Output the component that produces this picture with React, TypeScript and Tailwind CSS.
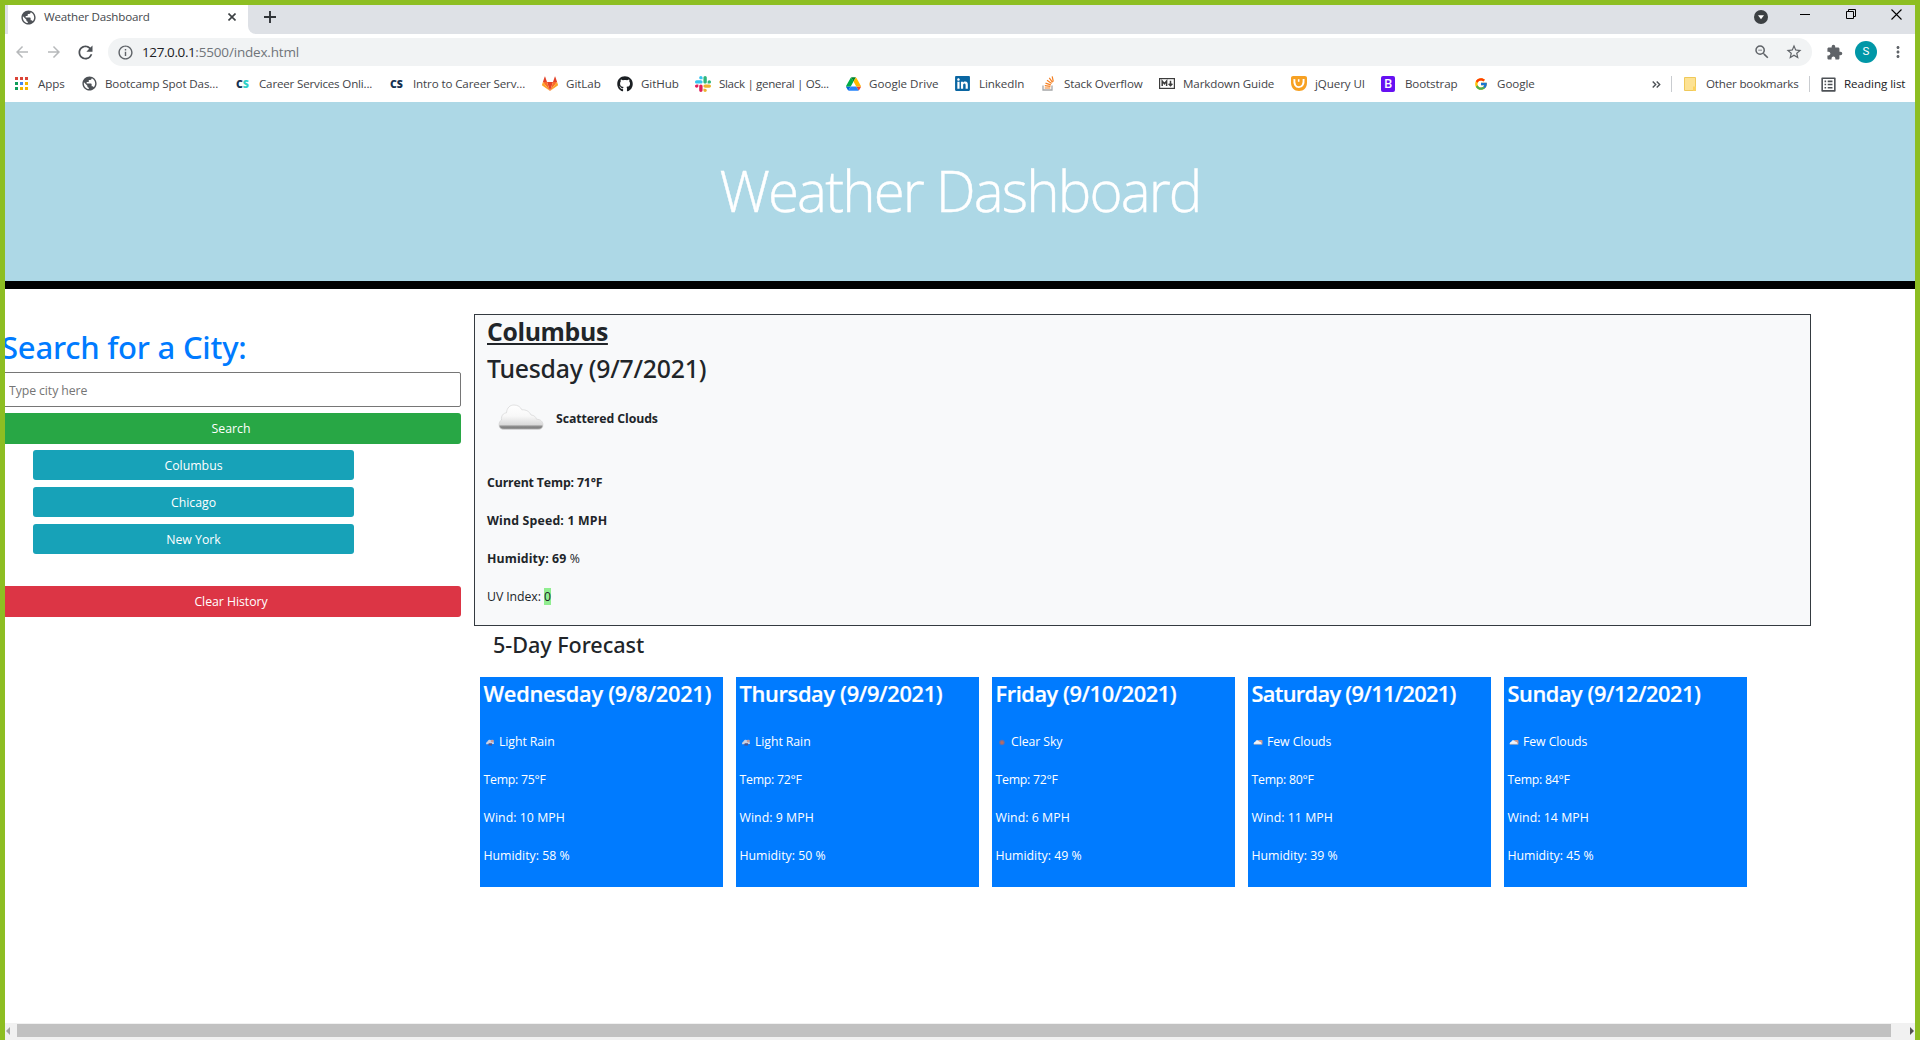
import React from "react";
import { FcGoogle } from "react-icons/fc";
import { FaGithub, FaLinkedin } from "react-icons/fa";
import {
  MdArrowBack,
  MdArrowForward,
  MdExtension,
  MdInfoOutline,
  MdMoreVert,
  MdOutlineListAlt,
  MdPublic,
  MdRefresh,
  MdStarBorder,
  MdZoomOut,
} from "react-icons/md";

function AppsIcon() {
  const colors = ["#db4437", "#db4437", "#db4437", "#0f9d58", "#4285f4", "#f4b400", "#0f9d58", "#f4b400", "#f4b400"];
  return (
    <svg width="13" height="13" viewBox="0 0 13 13">
      {colors.map((c, i) => (
        <rect key={i} x={(i % 3) * 5} y={Math.floor(i / 3) * 5} width="3" height="3" fill={c} />
      ))}
    </svg>
  );
}

function GitlabIcon() {
  return (
    <svg width="16" height="16" viewBox="0 0 16 16">
      <path d="M8 15 5 6h6z" fill="#e24329" />
      <path d="M8 15 5 6H.9zM8 15l3-9h4.1z" fill="#fc6d26" />
      <path d="M.9 6 0 8.8c-.1.3 0 .6.2.7L8 15zM15.100 6l.9 2.800c.1.3 0 .6-.2.7L8 15z" fill="#fca326" />
      <path d="M.9 6H5L3.200.8c-.1-.3-.4-.3-.5 0zM15.100 6H11l1.800-5.200c.1-.3.4-.3.5 0z" fill="#e24329" />
    </svg>
  );
}

function SlackIcon() {
  return (
    <svg width="16" height="16" viewBox="0 0 122.800 122.800">
      <path d="M25.800 77.600c0 7.100-5.800 12.900-12.900 12.900S0 84.700 0 77.600s5.800-12.900 12.900-12.900h12.900zM32.300 77.600c0-7.100 5.800-12.900 12.900-12.900s12.900 5.800 12.900 12.900v32.300c0 7.100-5.800 12.900-12.900 12.900s-12.900-5.800-12.900-12.900z" fill="#e01e5a" />
      <path d="M45.200 25.800c-7.100 0-12.900-5.800-12.900-12.900S38.100 0 45.200 0s12.900 5.800 12.900 12.900v12.900zM45.200 32.300c7.100 0 12.900 5.800 12.900 12.900s-5.800 12.900-12.900 12.900H12.900C5.800 58.100 0 52.300 0 45.200s5.800-12.900 12.900-12.900z" fill="#36c5f0" />
      <path d="M97 45.200c0-7.100 5.800-12.900 12.900-12.900s12.900 5.800 12.900 12.900-5.800 12.900-12.900 12.900H97zM90.500 45.200c0 7.100-5.800 12.900-12.900 12.900s-12.900-5.800-12.900-12.900V12.900C64.700 5.800 70.500 0 77.600 0s12.900 5.800 12.900 12.900z" fill="#2eb67d" />
      <path d="M77.600 97c7.100 0 12.900 5.800 12.900 12.900s-5.800 12.900-12.900 12.900-12.900-5.800-12.900-12.900V97zM77.600 90.500c-7.100 0-12.900-5.800-12.900-12.900s5.800-12.900 12.900-12.900h32.300c7.100 0 12.900 5.800 12.900 12.900s-5.800 12.900-12.900 12.900z" fill="#ecb22e" />
    </svg>
  );
}

function DriveIcon() {
  return (
    <svg width="15" height="14" viewBox="0 0 87.300 78">
      <path d="m6.600 66.850 3.850 6.650c.8 1.400 1.950 2.500 3.300 3.300L27.500 53H0c0 1.550.4 3.100 1.200 4.500z" fill="#0066da" />
      <path d="M43.650 25 29.900 1.200c-1.350.8-2.500 1.900-3.300 3.300L1.200 48.500A9.060 9.060 0 0 0 0 53h27.500z" fill="#00ac47" />
      <path d="M73.550 76.800c1.350-.8 2.500-1.900 3.300-3.300l9.250-16c.8-1.400 1.200-2.950 1.200-4.500H59.800l5.850 11.500z" fill="#ea4335" />
      <path d="M43.650 25 57.400 1.200C56.050.4 54.500 0 52.900 0H34.400c-1.600 0-3.150.45-4.500 1.200z" fill="#00832d" />
      <path d="M59.800 53H27.500L13.750 76.800c1.350.8 2.900 1.200 4.500 1.200h50.800c1.600 0 3.150-.45 4.500-1.200z" fill="#2684fc" />
      <path d="m73.400 26.500-12.700-22c-.8-1.400-1.950-2.500-3.300-3.300L43.650 25 59.800 53h27.450c0-1.550-.4-3.100-1.200-4.500z" fill="#ffba00" />
    </svg>
  );
}

function StackOverflowIcon() {
  return (
    <svg width="13" height="15" viewBox="0 0 13 15" fill="none">
      <path d="M1 9.500V14h9V9.500" stroke="#a5a6a8" strokeWidth="1.300" />
      <path d="M2.700 12h5.600M2.800 9.700l5.600.6M3.500 7.100l5.300 1.800M5 4.200l4.600 3.200M7.300 1.800l3.200 4.500M10.200.4l1.100 5.200" stroke="#f48024" strokeWidth="1.200" />
    </svg>
  );
}

function MarkdownIcon() {
  return (
    <svg width="16" height="11" viewBox="0 0 16 11" fill="none" stroke="#3c3c3c">
      <rect x=".6" y=".6" width="14.800" height="9.800" strokeWidth="1.200" />
      <path d="M3.200 8V3l2.200 2.700L7.600 3v5M11.500 2.800v4.500M9.600 5.700l1.900 2 1.900-2" strokeWidth="1.500" />
    </svg>
  );
}

function JqueryUiIcon() {
  return (
    <svg width="16" height="15" viewBox="0 0 15 15" preserveAspectRatio="none" fill="none">
      <path d="M0 2C0 .8.8 0 2 0h11c1.200 0 2 .8 2 2v4.500c0 5-3 8.500-7.500 8.500S0 11.500 0 6.500z" fill="#f7a123" />
      <path d="M3.200 3.200c-.5 5 1 8 4.300 8 3.300 0 4.600-3.300 4.300-8.200" stroke="#fff" strokeWidth="1.800" />
      <path d="M7.200 3.200v2.600" stroke="#fff" strokeWidth="1.500" />
    </svg>
  );
}

function LetterBadge() {
  return (
    <span className="flex h-4 w-3.5 items-center justify-center rounded-[2px] bg-[#6610f2] text-[12.500px] font-semibold leading-none text-white">
      B
    </span>
  );
}

function CsMark({ accent }: { accent: string }) {
  return (
    <span className="font-['Open_Sans'] text-[10.500px] font-extrabold leading-none tracking-[-0.2px] text-[#14304f]">
      C<span className={accent}>S</span>
    </span>
  );
}

const globe = <MdPublic className="-ml-px size-[17px] text-[#4d5156]" />;

const bookmarks = [
  { label: "Apps", icon: <AppsIcon />, item: "w-[67px]", box: "w-[23px]", track: "tracking-[-0.05px]" },
  { label: "Bootcamp Spot Das...", icon: globe, item: "w-[154px]", box: "w-[23px]", track: "tracking-[-0.12px]" },
  { label: "Career Services Onli...", icon: <CsMark accent="text-[#2fd0c8]" />, item: "w-[154px]", box: "w-[23px]", track: "tracking-[-0.18px]" },
  { label: "Intro to Career Serv...", icon: <CsMark accent="text-[#14304f]" />, item: "w-[152px]", box: "w-[23px]", track: "tracking-[-0.13px]" },
  { label: "GitLab", icon: <GitlabIcon />, item: "w-[75px]", box: "w-[24px]", track: "tracking-[-0.05px]" },
  { label: "GitHub", icon: <FaGithub className="size-4 text-[#1b1f23]" />, item: "w-[78px]", box: "w-[24px]", track: "tracking-[-0.1px]" },
  { label: "Slack | general | OS...", icon: <SlackIcon />, item: "w-[151px]", box: "w-[24px]", track: "tracking-[-0.33px]" },
  { label: "Google Drive", icon: <DriveIcon />, item: "w-[109px]", box: "w-[23px]", track: "tracking-[0px]" },
  { label: "LinkedIn", icon: <FaLinkedin className="-ml-px size-[17px] text-[#0a66a2]" />, item: "w-[87px]", box: "w-[24px]", track: "tracking-[-0.1px]" },
  { label: "Stack Overflow", icon: <StackOverflowIcon />, item: "w-[117px]", box: "w-[22px]", track: "tracking-[-0.13px]" },
  { label: "Markdown Guide", icon: <MarkdownIcon />, item: "w-[132px]", box: "w-[24px]", track: "tracking-[-0.12px]" },
  { label: "jQuery UI", icon: <JqueryUiIcon />, item: "w-[90px]", box: "w-[24px]", track: "tracking-[-0.1px]" },
  { label: "Bootstrap", icon: <LetterBadge />, item: "w-[93px]", box: "w-[24px]", track: "tracking-[-0.12px]" },
  { label: "Google", icon: <FcGoogle className="size-[14px]" />, item: "w-[70px]", box: "w-[23px]", track: "tracking-[-0.05px]" },
];

function TabStrip() {
  return (
    <div className="flex h-[29px] bg-[#dee1e6] pl-[3px]">
      <div className="flex h-full w-[240px] items-center bg-white pl-[13px] pr-[12px] pb-[5px]">
        <MdPublic className="-ml-px size-[17px] text-[#4d5156]" />
        <span className="ml-[7px] flex-1 text-[11.600px] tracking-[-0.2px] text-[#45494d]">Weather Dashboard</span>
        <svg width="8" height="8" viewBox="0 0 8 8" className="text-[#3c4043]">
          <path d="m.5.5 7 7m0-7-7 7" stroke="currentColor" strokeWidth="1.600" />
        </svg>
      </div>
      <div className="flex h-full w-2 bg-white">
        <div className="h-full flex-1 rounded-bl-lg bg-[#dee1e6]" />
      </div>
      <svg width="12" height="12" viewBox="0 0 12 12" className="ml-[8px] mt-[6px]">
        <path d="M6 0v12M0 6h12" stroke="#303338" strokeWidth="1.900" />
      </svg>
      <div className="flex-1" />
      <svg width="14" height="14" viewBox="0 0 14 14" className="mt-[5px]">
        <circle cx="7" cy="7" r="7" fill="#3c4043" />
        <path d="M4 5.300h6L7 9.300z" fill="#fff" />
      </svg>
      <svg width="10" height="10" viewBox="0 0 10 10" className="ml-[32px] mt-[4px]">
        <path d="M0 5.500h10" stroke="#000" />
      </svg>
      <svg width="10" height="10" viewBox="0 0 10 10" fill="none" stroke="#000" className="ml-[36px] mt-[4px]">
        <path d="M.5 2.500h7v7h-7zM2.500 2.500v-2h7v7h-2" />
      </svg>
      <svg width="11" height="11" viewBox="0 0 11 11" className="ml-[35px] mr-[13px] mt-[4px]">
        <path d="m.5.5 10 10m0-10-10 10" stroke="#000" strokeWidth="1.100" />
      </svg>
    </div>
  );
}

function AddressBar() {
  return (
    <div className="flex h-[36px] items-center pl-[8px] text-[#5f6368]">
      <MdArrowBack className="size-[18px] text-[#b7b9bb]" />
      <MdArrowForward className="ml-[14px] size-[18px] text-[#b7b9bb]" />
      <MdRefresh className="ml-[12px] size-[21px] text-[#4d5156]" />
      <div className="ml-[12px] flex h-7 w-[1704px] items-center rounded-full bg-[#f1f3f4] pl-[9px] pr-[9px]">
        <MdInfoOutline className="size-[17px]" />
        <span className="ml-[8px] flex-1 text-[13.500px] tracking-[-0.180px] text-[#70757a]">
          <span className="tracking-[-0.400px] text-[#202124]">127.0.0.1</span>:5500/index.html
        </span>
        <MdZoomOut className="size-[18px]" />
        <MdStarBorder className="ml-[14px] size-[18px]" />
      </div>
      <MdExtension className="ml-[14px] size-[17px]" />
      <span className="ml-[12px] flex size-[22px] items-center justify-center rounded-full bg-[#0097a7] font-[Roboto] text-[11.500px] text-white">
        S
      </span>
      <MdMoreVert className="ml-[12px] size-[18px]" />
    </div>
  );
}

function BookmarksBar() {
  return (
    <div className="flex h-[32px] items-center pb-[4px] pl-[10px] text-[11.600px] text-[#3f4347]">
      {bookmarks.map((b) => (
        <div key={b.label} className={`flex shrink-0 items-center ${b.item}`}>
          <span className={`flex shrink-0 items-center ${b.box}`}>{b.icon}</span>
          <span className={`whitespace-nowrap ${b.track}`}>{b.label}</span>
        </div>
      ))}
      <div className="flex-1" />
      <svg width="9" height="7" viewBox="0 0 9 7" fill="none" className="mr-[10px]">
        <path d="M.7.5l3 3-3 3M4.700.5l3 3-3 3" stroke="#4d5156" strokeWidth="1.400" />
      </svg>
      <div className="h-4 w-px bg-[#c9ccd0]" />
      <svg width="12" height="14" viewBox="0 0 12 14" className="ml-[12px]">
        <path d="M.5.5h11v13H.5z" fill="#fde293" stroke="#efc95b" />
        <path d="M9 9.500h3V14H9z" fill="#fbd25f" />
      </svg>
      <span className="ml-[10px] w-[103px] whitespace-nowrap tracking-[-0.18px]">Other bookmarks</span>
      <div className="h-4 w-px bg-[#c9ccd0]" />
      <MdOutlineListAlt className="ml-[9px] size-[19px] text-[#4d5156]" />
      <span className="ml-[6px] w-[71px] whitespace-nowrap tracking-[-0.05px] text-[#202124]">Reading list</span>
    </div>
  );
}

function ScatteredClouds() {
  return (
    <svg width="46" height="28" viewBox="0 0 46 28" className="-mt-[6px]">
      <defs>
        <linearGradient id="cloud" x1="0" y1="0" x2="0" y2="1">
          <stop offset="0" stopColor="#fff" />
          <stop offset=".45" stopColor="#f8f8f8" />
          <stop offset=".8" stopColor="#dadada" />
          <stop offset=".87" stopColor="#8f8f8f" />
          <stop offset=".94" stopColor="#7d7d7d" />
          <stop offset="1" stopColor="#c0c0c0" />
        </linearGradient>
      </defs>
      <path
        d="M6 26.500c-3 0-5-2-5-4.800 0-2.400 1.200-3.900 2.500-4.700C3 12.500 5.500 10 8.500 9.800 9 4.500 12 2 16 2c4 0 6.500 2 7.800 4.800C28 6.500 31.500 8.500 33 12c3 .2 4.800 1.800 5.500 4.200 4 0 6.500 2.500 6.500 5.500s-2 4.800-5 4.800z"
        fill="url(#cloud)"
        stroke="#d2d2d2"
        strokeWidth=".8"
        strokeOpacity=".8"
      />
    </svg>
  );
}

type Sky = "Light Rain" | "Clear Sky" | "Few Clouds";

function SkyIcon({ sky }: { sky: Sky }) {
  if (sky === "Clear Sky") {
    return (
      <svg width="10" height="8" viewBox="0 0 10 8">
        <circle cx="5" cy="4.500" r="2.700" fill="#6f6d9d" />
        <circle cx="5" cy="4.500" r="1.600" fill="#b56c62" />
      </svg>
    );
  }
  if (sky === "Few Clouds") {
    return (
      <svg width="10" height="8" viewBox="0 0 10 8">
        <rect x="5" y="2" width="4.500" height="4.200" rx="1" fill="#cf9a8f" />
        <path d="M.6 6.200C.6 4.500 1.500 4 2.200 4c.3-2 3-2.600 3.800-.5 1.500 0 2.600 1 2.600 2.700z" fill="#f2f4f8" />
        <path d="M1 6.400h8.300" stroke="#8fa3c4" />
      </svg>
    );
  }
  return (
    <svg width="10" height="8" viewBox="0 0 10 8">
      <path d="M1 6.300C1 4.500 1.800 3.700 2.500 3.500 3 1.500 5.500 1 6.400 2.700 8 2.500 9 3.700 9 6z" fill="#c9d0e0" />
      <rect x="5.800" y="1.800" width="3" height="2.400" rx="1" fill="#c99a98" />
      <path d="M3.700 5.200h3.300v2.300H3.200z" fill="#4a5590" />
    </svg>
  );
}

const forecast: { day: string; track: string; sky: Sky; temp: number; wind: number; humidity: number }[] = [
  { day: "Wednesday (9/8/2021)", track: "tracking-[-0.260px]", sky: "Light Rain", temp: 75, wind: 10, humidity: 58 },
  { day: "Thursday (9/9/2021)", track: "tracking-[-0.330px]", sky: "Light Rain", temp: 72, wind: 9, humidity: 50 },
  { day: "Friday (9/10/2021)", track: "tracking-[-0.440px]", sky: "Clear Sky", temp: 72, wind: 6, humidity: 49 },
  { day: "Saturday (9/11/2021)", track: "tracking-[-0.690px]", sky: "Few Clouds", temp: 80, wind: 11, humidity: 39 },
  { day: "Sunday (9/12/2021)", track: "tracking-[-0.460px]", sky: "Few Clouds", temp: 84, wind: 14, humidity: 45 },
];

function SearchPanel() {
  return (
    <aside className="-ml-1 flex w-[460px] shrink-0 flex-col pt-[39px] text-[12.300px]">
      <h2 className="font-['Noto_Sans'] text-[31px] font-medium leading-[38px] tracking-[-0.220px] text-[#007bff]">
        Search for a City:
      </h2>
      <input
        placeholder="Type city here"
        className="mt-1.5 h-[35px] rounded-[2px] border border-[#767676] bg-white pl-[7px] pt-px tracking-[-0.1px] placeholder:text-[#757575]"
      />
      <button className="mt-1.5 h-[31px] rounded-[3px] bg-[#28a745] pt-0.5 text-white">Search</button>
      <div className="mt-1.5 flex flex-col gap-[7px] pl-8 pr-[107px]">
        {["Columbus", "Chicago", "New York"].map((city) => (
          <button key={city} className="h-[30px] rounded-[3px] bg-[#17a2b8] pt-[3px] text-white">
            {city}
          </button>
        ))}
      </div>
      <button className="mt-8 h-[31px] rounded-[3px] bg-[#dc3545] pt-0.5 tracking-[-0.05px] text-white">Clear History</button>
    </aside>
  );
}

function CurrentWeather() {
  return (
    <section className="h-[312px] w-[1337px] border border-[#343a40] bg-[#f8f9fa] pl-3 pt-px text-[12.300px] text-[#212529]">
      <h2 className="text-[24.800px] font-bold leading-[30px] tracking-[-0.350px] underline decoration-2 underline-offset-[2px]">
        Columbus
      </h2>
      <h2 className="mt-[7px] font-['Noto_Sans'] text-[24.800px] font-medium leading-[30px] tracking-[-0.230px]">
        Tuesday (9/7/2021)
      </h2>
      <div className="flex h-[73px] items-center pl-[11px] font-bold">
        <ScatteredClouds />
        <span className="ml-3 tracking-[-0.100px]">Scattered Clouds</span>
      </div>
      <div className="mt-[18px] flex flex-col gap-5 font-bold leading-[18px]">
        <p className="tracking-[-0.140px]">Current Temp: 71°F</p>
        <p className="tracking-[0.180px]">Wind Speed: 1 MPH</p>
        <p className="tracking-[0.120px]">
          Humidity: 69 <span className="font-normal">%</span>
        </p>
        <p className="font-normal tracking-[-0.080px]">
          UV Index: <span className="bg-[#90ee90]">0</span>
        </p>
      </div>
    </section>
  );
}

function Forecast() {
  return (
    <section>
      <h3 className="mt-[6px] pl-[19px] font-['Noto_Sans'] text-[21.600px] font-medium leading-[26px] tracking-[-0.050px] text-[#212529]">
        5-Day Forecast
      </h3>
      <div className="mt-[19px] flex gap-[13px] pl-[6px]">
        {forecast.map((f) => (
          <article key={f.day} className="h-[210px] w-[243px] bg-[#007bff] p-[3px] text-[12.300px] text-white">
            <h3 className={`whitespace-nowrap pl-[0.5px] text-[21.800px] font-semibold leading-[27px] [-webkit-text-stroke:0.2px_white] ${f.track}`}>
              {f.day}
            </h3>
            <div className="mt-[26px] flex flex-col gap-5 pl-[0.5px] leading-[18px]">
              <p className="flex items-center">
                <span className="flex w-[15.500px] shrink-0 pl-[1px]">
                  <SkyIcon sky={f.sky} />
                </span>
                <span className="tracking-[-0.080px]">{f.sky}</span>
              </p>
              <p className="tracking-[-0.250px]">Temp: {f.temp}°F</p>
              <p className="tracking-[0.050px]">Wind: {f.wind} MPH</p>
              <p>Humidity: {f.humidity} %</p>
            </div>
          </article>
        ))}
      </div>
    </section>
  );
}

function HorizontalScrollbar() {
  return (
    <div className="flex h-[17px] items-center bg-[#f1f1f1] pb-[2px] pl-px pr-px">
      <svg width="4" height="8" viewBox="0 0 4 8">
        <path d="M4 0v8L0 4z" fill="#a3a3a3" />
      </svg>
      <div className="ml-[7px] mr-[19px] h-[13px] flex-1 bg-[#c1c1c1]" />
      <svg width="4" height="8" viewBox="0 0 4 8">
        <path d="M0 0v8l4-4z" fill="#505050" />
      </svg>
    </div>
  );
}

export default function App() {
  return (
    <div className="flex h-[1040px] w-[1920px] flex-col overflow-hidden border-x-[5px] border-t-[5px] border-[#8dbe22] bg-white font-['Open_Sans',sans-serif]">
      <TabStrip />
      <AddressBar />
      <BookmarksBar />
      <header className="flex h-[187px] shrink-0 justify-center border-b-8 border-black bg-[#add8e6] pt-[54px]">
        <h1 className="text-[56.500px] font-light leading-[70px] tracking-[-1.880px] text-white [-webkit-text-stroke:0.4px_white]">
          Weather Dashboard
        </h1>
      </header>
      <main className="flex min-h-0 flex-1 gap-[13px] overflow-hidden">
        <SearchPanel />
        <div className="pt-[25px]">
          <CurrentWeather />
          <Forecast />
        </div>
      </main>
      <HorizontalScrollbar />
    </div>
  );
}
